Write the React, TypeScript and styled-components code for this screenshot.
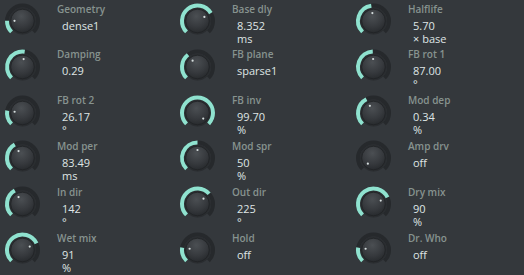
import React from 'react'
import styled, { createGlobalStyle } from 'styled-components'

type Param = {
    label: string
    value: string
    unit?: string
    pos: number
}

const params: Param[] = [
    { label: 'Geometry', value: 'dense1', pos: 0.17 },
    { label: 'Base dly', value: '8.352', unit: 'ms', pos: 0.72 },
    { label: 'Halflife', value: '5.70', unit: '× base', pos: 0.47 },
    { label: 'Damping', value: '0.29', pos: 0.53 },
    { label: 'FB plane', value: 'sparse1', pos: 0.36 },
    { label: 'FB rot 1', value: '87.00', unit: '°', pos: 0.49 },
    { label: 'FB rot 2', value: '26.17', unit: '°', pos: 0.2 },
    { label: 'FB inv', value: '99.70', unit: '%', pos: 0.997 },
    { label: 'Mod dep', value: '0.34', unit: '%', pos: 0.4 },
    { label: 'Mod per', value: '83.49', unit: 'ms', pos: 0.39 },
    { label: 'Mod spr', value: '50', unit: '%', pos: 0.5 },
    { label: 'Amp drv', value: 'off', pos: 0 },
    { label: 'In dir', value: '142', unit: '°', pos: 0.39 },
    { label: 'Out dir', value: '225', unit: '°', pos: 0.68 },
    { label: 'Dry mix', value: '90', unit: '%', pos: 0.74 },
    { label: 'Wet mix', value: '91', unit: '%', pos: 0.74 },
    { label: 'Hold', value: 'off', pos: 0.2 },
    { label: 'Dr. Who', value: 'off', pos: 0.2 },
]

const CX = 22.5
const CY = 21
const START = -135
const SWEEP = 270

// angle in degrees, 0 = up, clockwise
const pt = (r: number, deg: number) => {
    const a = (deg * Math.PI) / 180
    return [CX + r * Math.sin(a), CY - r * Math.cos(a)]
}

const arc = (r: number, from: number, to: number) => {
    const [x1, y1] = pt(r, from)
    const [x2, y2] = pt(r, to)
    const large = to - from > 180 ? 1 : 0
    return `M ${x1} ${y1} A ${r} ${r} 0 ${large} 1 ${x2} ${y2}`
}

const Knob: React.FC<{ pos: number; id: number }> = ({ pos, id }) => {
    const end = START + SWEEP * pos
    const [dx, dy] = pt(8, end)
    return (
        <KnobSvg width="45" height="42" viewBox="0 0 45 42">
            <defs>
                <radialGradient id={`body${id}`} cx="45%" cy="30%" r="75%">
                    <stop offset="0%" stopColor="#4b4f53" />
                    <stop offset="60%" stopColor="#36393d" />
                    <stop offset="100%" stopColor="#25282b" />
                </radialGradient>
            </defs>
            <path d={arc(15.5, START, START + SWEEP)} stroke="#26292c" strokeWidth="4" fill="none" />
            <circle cx={CX} cy={CY} r="13.5" fill="#2a2d30" />
            {pos > 0.005 && (
                <path d={arc(15.5, START, end)} stroke="#8fe2cf" strokeWidth="4" fill="none" />
            )}
            <circle cx={CX} cy={CY} r="11.8" fill={`url(#body${id})`} stroke="#1f2224" strokeWidth="0.8" />
            <circle cx={dx} cy={dy} r="1.1" fill="#d6dede" />
        </KnobSvg>
    )
}

const App: React.FC = () => {
    return (
        <>
            <GlobalStyle />
            <Panel>
                {params.map((p, i) => (
                    <Cell key={p.label}>
                        <Knob pos={p.pos} id={i} />
                        <Info>
                            <Label>{p.label}</Label>
                            <Value>{p.unit ? `${p.value}\n${p.unit}` : p.value}</Value>
                        </Info>
                    </Cell>
                ))}
            </Panel>
        </>
    )
}

export default App

const GlobalStyle = createGlobalStyle`
    html, body {
        margin: 0;
        padding: 0;
        background: #34383c;
    }
`

const Panel = styled.div`
    width: 524px;
    height: 275px;
    background: #34383c;
    display: grid;
    grid-template-columns: 175px 176px 1fr;
    grid-template-rows: repeat(6, 45.83px);
    font-family: 'Open Sans', 'Noto Sans', sans-serif;
    overflow: hidden;
`

const Cell = styled.div`
    display: flex;
    align-items: flex-start;
`

const KnobSvg = styled.svg`
    flex: none;
    display: block;
`

const Info = styled.div`
    display: flex;
    flex-direction: column;
    margin-left: 12px;
    padding-top: 2.5px;
`

const Label = styled.div`
    font-size: 10px;
    font-weight: 600;
    line-height: 13px;
    color: #87938f;
    margin-bottom: 3px;
`

const Value = styled.div`
    font-size: 11px;
    line-height: 13px;
    color: #dfe5e5;
    padding-left: 5px;
    white-space: pre-line;
`
